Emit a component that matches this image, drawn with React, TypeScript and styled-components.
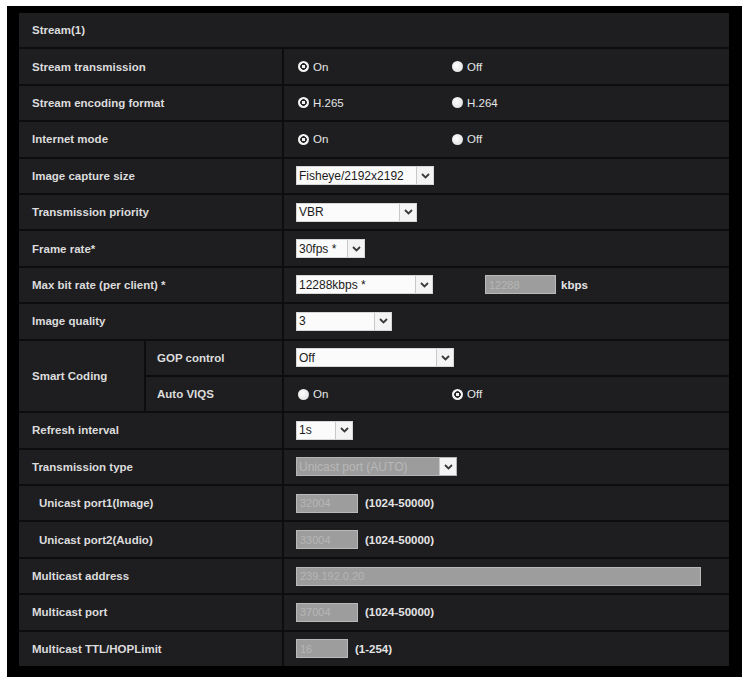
import React from 'react';
import styled, {createGlobalStyle} from "styled-components";

const GlobalStyle = createGlobalStyle`
  html, body {
    margin: 0;
    padding: 0;
    background: #ffffff;
  }
  body {
    font-family: "Liberation Sans", Arial, sans-serif;
  }
`

const Frame = styled.div`
  width: 735px;
  height: 671px;
  margin: 6px 0 0 7px;
  padding: 7px 13px 0 12px;
  box-sizing: border-box;
  background: #000;
`

const Table = styled.div`
  display: grid;
  grid-template-columns: 125px 136px 1fr;
  grid-auto-rows: 34.4px;
  gap: 2px;
  background: #0d0d0f;
  color: #dcdcdc;
  font-size: 11.5px;
`

const Cell = styled.div<{ $span?: number, $rows?: number, $indent?: number }>`
  display: flex;
  align-items: center;
  background: #1e1e21;
  padding-left: ${p => p.$indent ?? 13}px;
  grid-column: ${p => p.$span ? `span ${p.$span}` : 'auto'};
  grid-row: ${p => p.$rows ? `span ${p.$rows}` : 'auto'};
  font-weight: bold;
  white-space: nowrap;
`

const Header = styled(Cell)`
  grid-column: 1 / -1;
`

const Value = styled.div`
  display: flex;
  align-items: center;
  background: #1e1e21;
  padding-left: 12px;
  font-size: 11px;
`

const RadioOption = styled.label`
  display: flex;
  align-items: center;
  gap: 4px;
  width: 152px;
  margin-left: 2px;
  font-size: 11.5px;
  color: #e6e6e6;
`

const Dot = styled.span<{ $checked?: boolean }>`
  width: 11px;
  height: 11px;
  border-radius: 50%;
  display: inline-block;
  background: ${p => p.$checked
    ? 'radial-gradient(circle, #f2f2f2 0 1.6px, #262626 1.8px 3.1px, #f2f2f2 3.3px)'
    : 'radial-gradient(circle at 40% 40%, #ffffff, #d8d8d8)'};
`

const SelectBox = styled.div<{ $disabled?: boolean }>`
  display: flex;
  align-items: stretch;
  height: 19px;
  box-sizing: border-box;
  border: 1px solid ${p => p.$disabled ? '#b4b4b4' : '#d6d6d6'};
  background: ${p => p.$disabled ? '#9c9c9c' : '#fbfbfb'};
  color: ${p => p.$disabled ? '#b8b8b8' : '#1a1a1a'};
  font-size: 12px;
`

const SelectText = styled.span`
  flex: 1;
  display: flex;
  align-items: center;
  padding-left: 2px;
  overflow: hidden;
  white-space: nowrap;
`

const ArrowBox = styled.span`
  width: 16px;
  display: flex;
  align-items: center;
  justify-content: center;
  background: #f4f4f4;
  border-left: 1px solid #c8c8c8;
`

const TextBox = styled.div`
  height: 19px;
  box-sizing: border-box;
  border: 1px solid #b9b9b9;
  background: #9d9d9d;
  color: #b6b6b6;
  font-size: 11px;
  display: flex;
  align-items: center;
  padding-left: 3px;
`

const Hint = styled.span<{ $gap?: number }>`
  margin-left: ${p => p.$gap ?? 7}px;
  font-weight: bold;
  font-size: 11.5px;
  color: #e4e4e4;
`

const Chevron = () => (
    <svg width="9" height="6" viewBox="0 0 9 6">
        <path d="M1 1 L4.5 4.5 L8 1" fill="none" stroke="#3a3a3a" strokeWidth="1.8"/>
    </svg>
)

const Select = ({text, width, disabled}: { text: string, width: number, disabled?: boolean }) => (
    <SelectBox style={{width}} $disabled={disabled}>
        <SelectText>{text}</SelectText>
        <ArrowBox><Chevron/></ArrowBox>
    </SelectBox>
)

const Radios = ({options, checked}: { options: string[], checked: number }) => (
    <>
        {options.map((o, i) => (
            <RadioOption key={o}>
                <Dot $checked={i === checked}/>
                {o}
            </RadioOption>
        ))}
    </>
)

const Row = ({label, indent, children}: { label: string, indent?: number, children: React.ReactNode }) => (
    <>
        <Cell $span={2} $indent={indent}>{label}</Cell>
        <Value>{children}</Value>
    </>
)

const App = () => {
    return (
        <>
            <GlobalStyle/>
            <Frame>
                <Table>
                    <Header>Stream(1)</Header>
                    <Row label="Stream transmission"><Radios options={["On", "Off"]} checked={0}/></Row>
                    <Row label="Stream encoding format"><Radios options={["H.265", "H.264"]} checked={0}/></Row>
                    <Row label="Internet mode"><Radios options={["On", "Off"]} checked={0}/></Row>
                    <Row label="Image capture size"><Select text="Fisheye/2192x2192" width={138}/></Row>
                    <Row label="Transmission priority"><Select text="VBR" width={121}/></Row>
                    <Row label="Frame rate*"><Select text="30fps *" width={69}/></Row>
                    <Row label="Max bit rate (per client) *">
                        <Select text="12288kbps *" width={137}/>
                        <TextBox style={{width: 71, marginLeft: 52}}>12288</TextBox>
                        <Hint $gap={5}>kbps</Hint>
                    </Row>
                    <Row label="Image quality"><Select text="3" width={96}/></Row>

                    <Cell $rows={2}>Smart Coding</Cell>
                    <Cell $indent={11}>GOP control</Cell>
                    <Value><Select text="Off" width={158}/></Value>
                    <Cell $indent={11}>Auto VIQS</Cell>
                    <Value><Radios options={["On", "Off"]} checked={1}/></Value>

                    <Row label="Refresh interval"><Select text="1s" width={57}/></Row>
                    <Row label="Transmission type"><Select text="Unicast port (AUTO)" width={161} disabled/></Row>
                    <Row label="Unicast port1(Image)" indent={20}>
                        <TextBox style={{width: 62}}>32004</TextBox>
                        <Hint>(1024-50000)</Hint>
                    </Row>
                    <Row label="Unicast port2(Audio)" indent={20}>
                        <TextBox style={{width: 62}}>33004</TextBox>
                        <Hint>(1024-50000)</Hint>
                    </Row>
                    <Row label="Multicast address">
                        <TextBox style={{width: 405}}>239.192.0.20</TextBox>
                    </Row>
                    <Row label="Multicast port">
                        <TextBox style={{width: 62}}>37004</TextBox>
                        <Hint>(1024-50000)</Hint>
                    </Row>
                    <Row label="Multicast TTL/HOPLimit">
                        <TextBox style={{width: 52}}>16</TextBox>
                        <Hint>(1-254)</Hint>
                    </Row>
                </Table>
            </Frame>
        </>
    );
};

export default App;
